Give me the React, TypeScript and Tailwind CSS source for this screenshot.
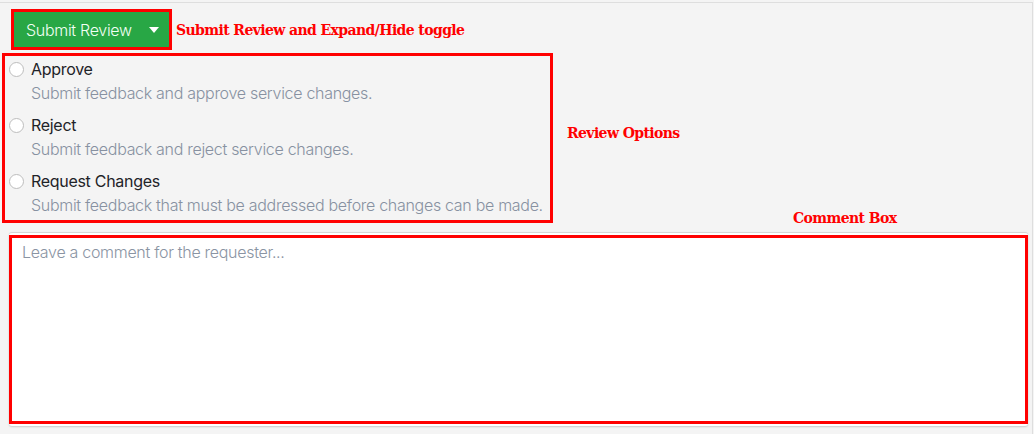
import { useState } from 'react';

type Option = { id: string; label: string; description: string };

const options: Option[] = [
  { id: 'approve', label: 'Approve', description: 'Submit feedback and approve service changes.' },
  { id: 'reject', label: 'Reject', description: 'Submit feedback and reject service changes.' },
  {
    id: 'changes',
    label: 'Request Changes',
    description: 'Submit feedback that must be addressed before changes can be made.',
  },
];

function Note({ children, className = '' }: { children: React.ReactNode; className?: string }) {
  return (
    <span
      className={`text-[14px] font-bold leading-5 tracking-[-0.6px] text-[#ff0000] whitespace-nowrap ${className}`}
      style={{ fontFamily: '"DejaVu Serif", "Liberation Serif", serif' }}
    >
      {children}
    </span>
  );
}

export default function App() {
  const [open, setOpen] = useState(true);
  const [choice, setChoice] = useState<string | null>(null);
  const [comment, setComment] = useState('');

  return (
    <div
      className="w-[1034px] h-[434px] bg-[#f4f4f4] overflow-hidden tracking-[-0.3px]"
      style={{ fontFamily: 'Inter, "Noto Sans", sans-serif' }}
    >
      <div className="mt-[2px] w-[1033px] h-[432px] border-t border-r border-[#dedede]">
        {/* toggle row */}
        <div className="flex items-center pt-[6px]">
          <div className="ml-[11px] border-[3px] border-[#ff0000]">
            <button
              onClick={() => setOpen(!open)}
              className="flex items-center h-[35px] w-[155px] bg-[#28a745] text-[#f2fff4]"
            >
              <span className="pl-[12px] text-[16px] font-light leading-6 whitespace-nowrap">Submit Review</span>
              <svg className="ml-[17px]" width="10" height="6" viewBox="0 0 10 6">
                <path d="M0 0 L10 0 L5 6 Z" fill="white" />
              </svg>
            </button>
          </div>
          <Note className="ml-[4px]">Submit Review and Expand/Hide toggle</Note>
        </div>

        {open && (
          <>
            <div className="flex items-start mt-[3px]">
              <div className="ml-[2px] w-[551px] border-[3px] border-[#ff0000] pt-[1px] pb-[3px] flex flex-col gap-2">
                {options.map(o => (
                  <label key={o.id} className="flex flex-col cursor-pointer">
                    <span className="flex items-center text-[16px] leading-6 text-[#1f2328] whitespace-nowrap">
                      <span
                        onClick={() => setChoice(o.id)}
                        className="ml-[4px] mr-[7px] w-[15px] h-[15px] rounded-full bg-white border border-[#bdbdbd] flex items-center justify-center"
                      >
                        {choice === o.id && <span className="w-[7px] h-[7px] rounded-full bg-[#28a745]" />}
                      </span>
                      {o.label}
                    </span>
                    <span className="pl-[26px] text-[16px] leading-6 font-light text-[#8791a1] whitespace-nowrap">
                      {o.description}
                    </span>
                  </label>
                ))}
              </div>
              <div className="flex flex-col pl-[14px]">
                <Note className="mt-[70px]">Review Options</Note>
                <Note className="mt-[65px] ml-[226px]">Comment Box</Note>
              </div>
            </div>

            <div className="mt-[4px] ml-[9px] w-[1019px] h-[194px] rounded-[3px] border-t border-[#d6d6d6] bg-white shadow-[0_1px_2px_rgba(0,0,0,0.18)]">
              <textarea
                value={comment}
                onChange={e => setComment(e.target.value)}
                placeholder="Leave a comment for the requester..."
                className="block mt-[2px] w-full h-[189px] resize-none bg-white border-[3px] border-[#ff0000] px-[10px] py-[2px] text-[16px] leading-6 font-light text-[#333] placeholder:text-[#8a94a3] outline-none"
              />
            </div>
          </>
        )}
      </div>
    </div>
  );
}
